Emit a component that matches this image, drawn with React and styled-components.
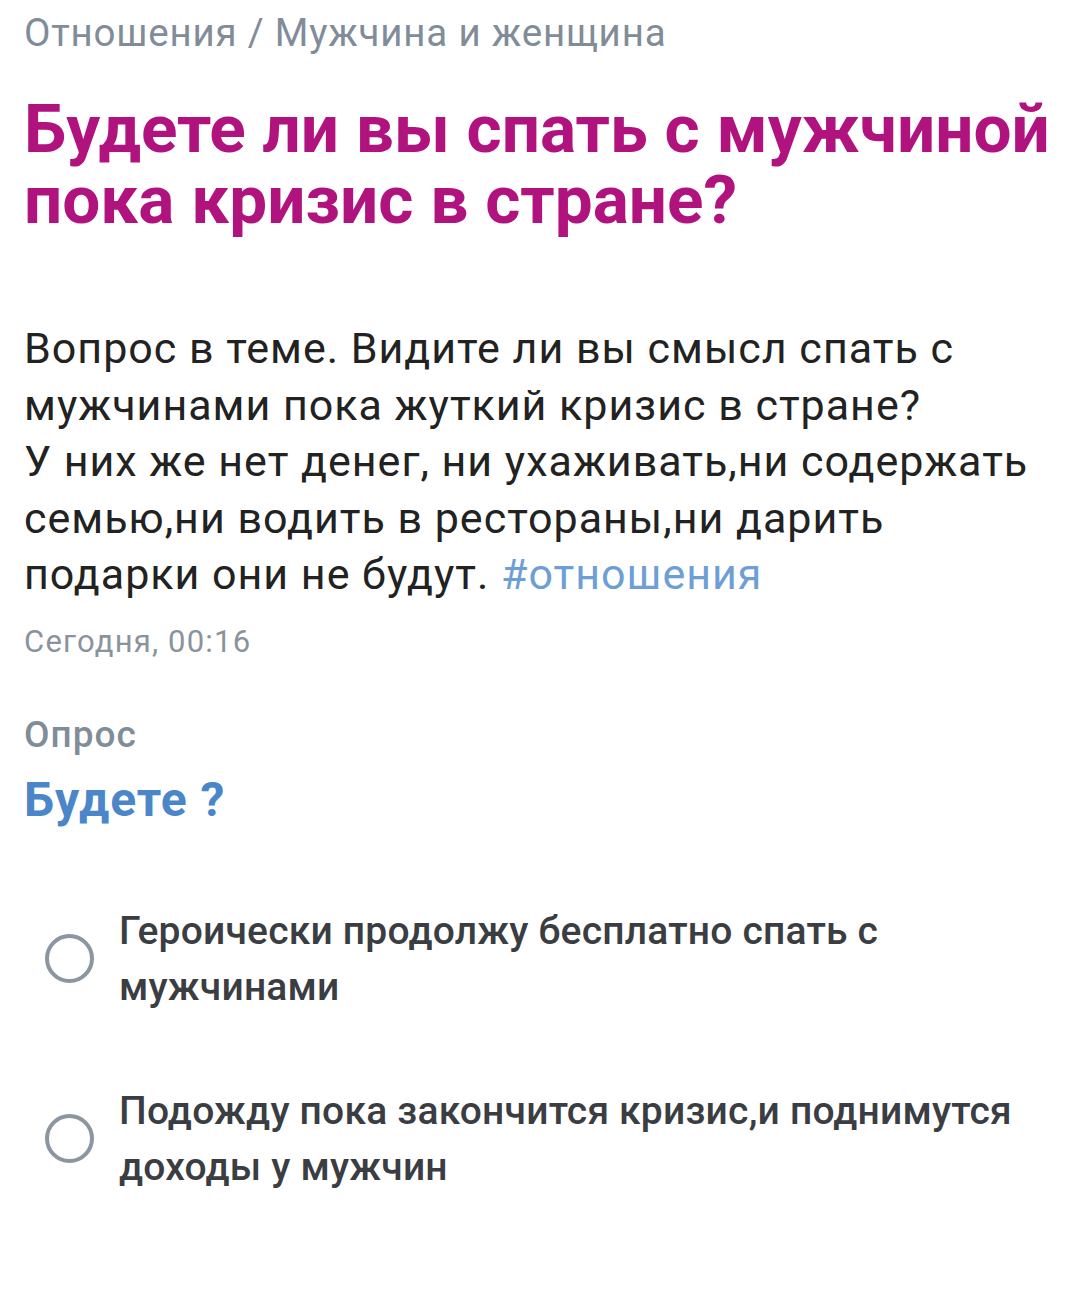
import React from 'react';
import styled, { createGlobalStyle } from 'styled-components';

const Global = createGlobalStyle`
  html, body {
    margin: 0;
    padding: 0;
    background: #ffffff;
  }
  body {
    font-family: Roboto, "Noto Sans", Arial, sans-serif;
    -webkit-font-smoothing: antialiased;
  }
`;

const Page = styled.main`
  width: 1080px;
  min-height: 1303px;
  box-sizing: border-box;
  padding: 10px 24px 0 24px;
  display: flex;
  flex-direction: column;
`;

const Breadcrumbs = styled.div`
  font-size: 38.5px;
  line-height: 46px;
  letter-spacing: 0.8px;
  color: #818c99;
`;

const Title = styled.h1`
  margin: 37px 0 0;
  font-size: 67.5px;
  line-height: 71px;
  font-weight: 700;
  color: #b0127e;
`;

const Body = styled.p`
  margin: 85px 0 0;
  font-size: 43px;
  line-height: 56.5px;
  letter-spacing: 1px;
  color: #222222;
`;

const Tag = styled.span`
  color: #6d9fd6;
`;

const Date = styled.div`
  margin-top: 19px;
  font-size: 31px;
  line-height: 40px;
  letter-spacing: 1.2px;
  color: #8a939c;
`;

const PollLabel = styled.div`
  margin-top: 50px;
  font-size: 37px;
  line-height: 46px;
  letter-spacing: 1px;
  font-weight: 500;
  color: #818c99;
`;

const PollQuestion = styled.h2`
  margin: 14px 0 0;
  font-size: 48px;
  line-height: 56px;
  letter-spacing: 1px;
  font-weight: 700;
  color: #4a86c8;
`;

const Options = styled.ul`
  list-style: none;
  margin: 75px 0 0;
  padding: 0 0 0 21px;
  display: flex;
  flex-direction: column;
  gap: 68px;
`;

const Option = styled.li`
  display: flex;
  align-items: center;
  gap: 25px;
`;

const Radio = styled.span`
  flex: none;
  width: 41px;
  height: 41px;
  border: 4.5px solid #8b96a1;
  border-radius: 50%;
`;

const OptionText = styled.span`
  font-size: 39px;
  line-height: 56px;
  letter-spacing: 0.2px;
  font-weight: 500;
  color: #3a3d42;
`;

const options = [
  'Героически продолжу бесплатно спать с мужчинами',
  'Подожду пока закончится кризис,и поднимутся доходы у мужчин',
];

export default function App() {
  return (
    <>
      <Global />
      <Page>
        <Breadcrumbs>Отношения / Мужчина и женщина</Breadcrumbs>
        <Title>
          Будете ли вы спать с мужчиной
          <br />
          пока кризис в стране?
        </Title>
        <Body>
          Вопрос в теме. Видите ли вы смысл спать с
          <br />
          мужчинами пока жуткий кризис в стране?
          <br />
          У них же нет денег, ни ухаживать,ни содержать
          <br />
          семью,ни водить в рестораны,ни дарить
          <br />
          подарки они не будут. <Tag>#отношения</Tag>
        </Body>
        <Date>Сегодня, 00:16</Date>
        <PollLabel>Опрос</PollLabel>
        <PollQuestion>Будете ?</PollQuestion>
        <Options>
          {options.map((text) => (
            <Option key={text}>
              <Radio />
              <OptionText>{text}</OptionText>
            </Option>
          ))}
        </Options>
      </Page>
    </>
  );
}
